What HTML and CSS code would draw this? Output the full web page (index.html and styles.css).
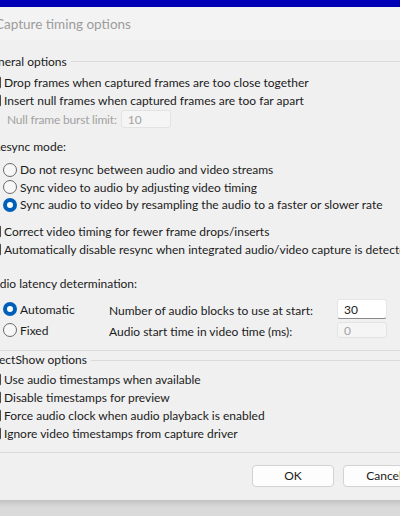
FILE: index.html
```html
<!DOCTYPE html>
<html>
<head>
<meta charset="utf-8">
<link rel="stylesheet" href="styles.css">
</head>
<body>
<div class="topbar"></div>
<div class="dialog">
  <div class="titlebar"><span class="title">Capture timing options</span></div>
  <div class="content">
    <div class="group-head g1"><span class="gtext">General options</span><span class="gline"></span></div>
    <div class="check r-drop"><span class="box"></span><span>Drop frames when captured frames are too close together</span></div>
    <div class="check"><span class="box"></span><span>Insert null frames when captured frames are too far apart</span></div>
    <div class="null-row"><span class="muted">Null frame burst limit:</span><span class="edit disabled">10</span></div>

    <div class="label resync">Resync mode:</div>
    <div class="radio r1"><span class="rb"></span><span>Do not resync between audio and video streams</span></div>
    <div class="radio"><span class="rb"></span><span>Sync video to audio by adjusting video timing</span></div>
    <div class="radio"><span class="rb on"></span><span>Sync audio to video by resampling the audio to a faster or slower rate</span></div>

    <div class="check c1"><span class="box"></span><span>Correct video timing for fewer frame drops/inserts</span></div>
    <div class="check"><span class="box"></span><span>Automatically disable resync when integrated audio/video capture is detected</span></div>

    <div class="label latency">Audio latency determination:</div>
    <div class="lat-grid">
      <div class="radio"><span class="rb on"></span><span>Automatic</span></div>
      <div class="lat-label">Number of audio blocks to use at start:</div>
      <div class="edit active">30</div>
      <div class="radio"><span class="rb"></span><span>Fixed</span></div>
      <div class="lat-label">Audio start time in video time (ms):</div>
      <div class="edit disabled small">0</div>
    </div>
    <div class="hline l1"></div>

    <div class="group-head g2"><span class="gtext">DirectShow options</span><span class="gline"></span></div>
    <div class="check d1"><span class="box"></span><span>Use audio timestamps when available</span></div>
    <div class="check"><span class="box"></span><span>Disable timestamps for preview</span></div>
    <div class="check"><span class="box"></span><span>Force audio clock when audio playback is enabled</span></div>
    <div class="check"><span class="box"></span><span>Ignore video timestamps from capture driver</span></div>
    <div class="hline l2"></div>

    <div class="buttons">
      <button class="btn">OK</button>
      <button class="btn">Cancel</button>
    </div>
  </div>
</div>
</body>
</html>
```

FILE: styles.css
```css
html, body {
  margin: 0;
  padding: 0;
}
body {
  width: 400px;
  height: 516px;
  overflow: hidden;
  background: linear-gradient(#c4c4c4, #dadada);
  font-family: Lato, "Noto Sans", sans-serif;
  font-size: 12px;
  color: #1b1b1b;
}
.topbar {
  height: 7px;
  background: #0000b8;
}
.dialog {
  margin-left: -24px;
  width: 470px;
  background: #f0f0f0;
  height: 493px;
  box-shadow: 0 2px 6px rgba(0,0,0,0.15);
}
.titlebar {
  height: 33px;
  background: #f3f3f3;
  display: flex;
  align-items: center;
  padding-left: 19px;
}
.title {
  font-size: 13.5px;
  color: #9c9c9c;
}
.content {
  display: flex;
  flex-direction: column;
  padding-top: 12px;
}
.group-head {
  height: 18px;
  display: flex;
  align-items: center;
  padding-left: 7px;
}
.gtext { white-space: nowrap; }
.gline {
  flex: 1;
  height: 1px;
  background: #dadada;
  margin-left: 4px;
  margin-top: 1px;
}
.check, .radio {
  height: 18px;
  display: flex;
  align-items: center;
  white-space: nowrap;
}
.check {
  padding-left: 12px;
}
.box {
  box-sizing: border-box;
  width: 13px;
  height: 13px;
  border: 1.5px solid #4a4a4a;
  border-radius: 2px;
  background: #f7f7f7;
  margin-right: 3px;
  flex: none;
}
.r-drop { margin-top: 3px; }
.null-row {
  height: 20px;
  display: flex;
  align-items: center;
  padding-left: 31px;
}
.muted { color: #a2a2a2; }
.null-row .muted { letter-spacing: -0.2px; }
.edit {
  box-sizing: border-box;
  width: 50px;
  height: 18px;
  display: flex;
  align-items: center;
  padding-left: 6px;
  background: #f5f5f5;
  border: 1px solid #e3e3e3;
  border-radius: 3px;
}
.null-row .edit { margin-left: 4px; }
.edit.disabled { color: #a2a2a2; }
.edit.active {
  background: #ffffff;
  height: 20px;
  border-color: #e6e6e6;
  border-bottom: 1px solid #8a8a8a;
  color: #1b1b1b;
}
.label {
  height: 18px;
  display: flex;
  align-items: center;
}
.resync { margin-top: 8px; padding-left: 17px; }
.radio { padding-left: 27px; height: 17.5px; }
.r1 { margin-top: 6px; }
.rb {
  box-sizing: border-box;
  width: 14px;
  height: 14px;
  border-radius: 50%;
  border: 1px solid #6a6a6a;
  background: #f7f7f7;
  margin-right: 3px;
  flex: none;
}
.rb.on {
  border: 4px solid #005fb8;
  background: #ffffff;
}
.c1 { margin-top: 9px; }
.latency { margin-top: 16px; padding-left: 9px; }
.lat-grid {
  margin-top: 6px;
  display: grid;
  grid-template-columns: 133px 228px 50px;
  grid-template-rows: 21px 21px;
  align-items: center;
}
.lat-grid .radio { height: 21px; }
.lat-label { padding-top: 3px; }
.edit.small { height: 16px; }
.hline {
  height: 1px;
  background: #dadada;
}
.l1 { margin-top: 9px; }
.g2 { margin-top: 0px; }
.d1 { margin-top: 2px; }
.l2 { margin-top: 9px; }
.buttons {
  display: flex;
  gap: 9px;
  padding-left: 276px;
  margin-top: 12px;
}
.btn {
  width: 82px;
  height: 22px;
  background: #fdfdfd;
  border: 1px solid #d2d2d2;
  border-radius: 4px;
  font-family: Lato, "Noto Sans", sans-serif;
  font-size: 12px;
  color: #1b1b1b;
  padding: 0;
}
```
